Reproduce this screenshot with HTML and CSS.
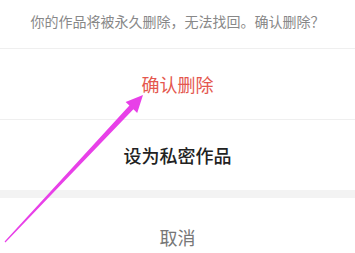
FILE: index.html
```html
<!DOCTYPE html>
<html lang="zh-CN">
<head>
<meta charset="utf-8">
<link rel="stylesheet" href="styles.css">
</head>
<body>
<div class="sheet">
  <div class="msg">你的作品将被永久删除，无法找回。确认删除？</div>
  <div class="row danger">确认删除</div>
  <div class="row primary">设为私密作品</div>
  <div class="gap"></div>
  <div class="row cancel">取消</div>
</div>
<svg class="arrow" width="355" height="253" viewBox="0 0 355 253">
  <polygon fill="#e840e8" points="143,95 137.2,112.9 133.4,109.3 5.4,242.4 4.6,241.6 129.4,105.5 125.6,101.9"/>
</svg>
</body>
</html>
```
FILE: styles.css
```css
html, body {
  margin: 0;
  padding: 0;
  background: #ffffff;
  overflow: hidden;
}
body {
  width: 355px;
  height: 253px;
  position: relative;
  font-family: "Noto Sans CJK SC", "Noto Sans", sans-serif;
}
.sheet {
  display: flex;
  flex-direction: column;
}
.msg {
  height: 49px;
  box-sizing: border-box;
  padding-bottom: 6px;
  display: flex;
  align-items: center;
  justify-content: center;
  font-size: 14px;
  color: #888888;
  border-bottom: 1px solid #efefef;
}
.row {
  height: 70px;
  display: flex;
  align-items: center;
  justify-content: center;
  font-size: 18px;
}
.danger {
  color: #e4574e;
  border-bottom: 1px solid #efefef;
}
.primary {
  color: #222222;
  font-weight: 500;
}
.gap {
  height: 8px;
  background: #f3f3f3;
}
.cancel {
  height: 54px;
  box-sizing: border-box;
  padding-top: 23px;
  color: #777777;
}
.arrow {
  position: absolute;
  left: 0;
  top: 0;
}
```
